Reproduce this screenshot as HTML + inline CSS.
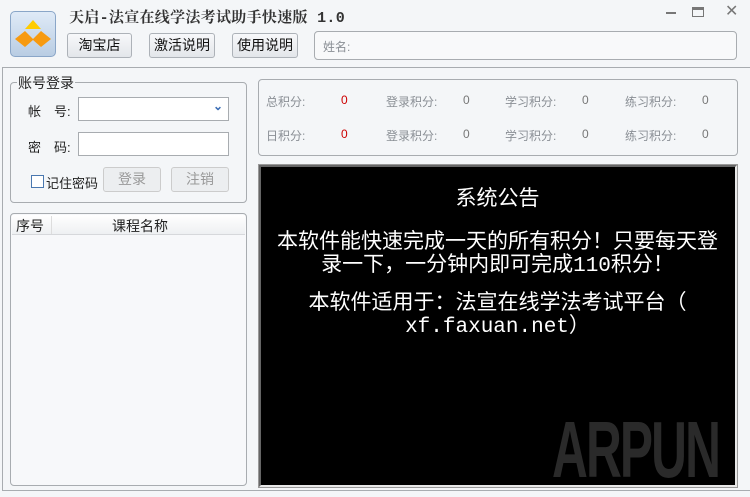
<!DOCTYPE html>
<html><head><meta charset="utf-8"><style>
*{margin:0;padding:0;box-sizing:border-box}
body{width:750px;height:497px;background:#f4f6f8;font-family:"Liberation Sans","Noto Sans CJK SC",sans-serif;font-size:13px;color:#222;position:relative;overflow:hidden}
.a{position:absolute}
.btn{position:absolute;height:25px;border:1px solid #adb2b8;border-radius:3px;background:linear-gradient(#f7f8fa,#e3e6ea);font-size:14px;text-align:center;line-height:23px;color:#111}
.box{position:absolute;border:1px solid #a8acb0;border-radius:4px}
.inp{position:absolute;background:#fff;border:1px solid #a8acb0}
.g{color:#8a8f95;font-size:12px}
.r{color:#c00;font-size:12px}
.n{color:#777;font-size:12px}
.w{color:#fff;font-size:21px;width:477px;text-align:center;left:0;line-height:23px;font-family:"Liberation Mono","Noto Sans CJK SC",monospace;white-space:nowrap}
</style></head><body>
<div class="a" style="left:10px;top:11px;width:46px;height:46px;border-radius:5px;border:1px solid #8aa6c8;background:linear-gradient(#dfeaf7,#b9cde3)">
<svg width="44" height="44" viewBox="0 0 44 44"><polygon points="22,8 30,17 14,17" fill="#ffcc00"/><polygon points="4,27 14,19 22,27 30,19 40,27 30,35 22,28 14,35" fill="#f79a10"/></svg></div>
<div class="a" style="left:69px;top:6px;font-size:15px;font-weight:bold;color:#333;font-family:'Liberation Mono','Noto Serif CJK SC',monospace;letter-spacing:0.3px">天启-法宣在线学法考试助手快速版 1.0</div>
<div class="btn" style="left:67px;top:33px;width:65px">淘宝店</div>
<div class="btn" style="left:149px;top:33px;width:66px">激活说明</div>
<div class="btn" style="left:232px;top:33px;width:66px">使用说明</div>
<div class="box" style="left:314px;top:31px;width:423px;height:29px;background:#f8f9fa"><span class="g" style="position:absolute;left:8px;top:6px">姓名:</span></div>
<div class="a" style="left:666px;top:12px;width:10px;height:2px;background:#777"></div>
<div class="a" style="left:692px;top:7px;width:12px;height:10px;border:1px solid #777;border-top-width:3px"></div>
<div class="a" style="left:725px;top:1px;font-size:16px;color:#777">✕</div>
<div class="a" style="left:2px;top:67px;width:748px;height:424px;border:1px solid #a8acb0;border-right:none"></div>
<div class="box" style="left:10px;top:82px;width:237px;height:121px"></div>
<div class="a" style="left:17px;top:73px;background:#f4f6f8;font-size:14px;padding:0 1px">账号登录</div>
<div class="a" style="left:28px;top:101px;font-size:13px">帐　号:</div>
<div class="inp" style="left:78px;top:97px;width:151px;height:24px"><span style="position:absolute;right:5px;top:1px;color:#3a6db5;font-size:12px;font-weight:bold">⌄</span></div>
<div class="a" style="left:28px;top:137px;font-size:13px">密　码:</div>
<div class="inp" style="left:78px;top:132px;width:151px;height:24px"></div>
<div class="a" style="left:31px;top:175px;width:13px;height:13px;border:1px solid #4a78b0;background:#fff"></div>
<div class="a" style="left:46px;top:173px;font-size:13px">记住密码</div>
<div class="btn" style="left:103px;top:167px;width:58px;color:#999;background:#eceef0;border-color:#ccc">登录</div>
<div class="btn" style="left:171px;top:167px;width:58px;color:#999;background:#eceef0;border-color:#ccc">注销</div>
<div class="box" style="left:10px;top:213px;width:237px;height:273px;background:#f7f8fa"></div>
<div class="a" style="left:12px;top:215px;width:233px;height:20px;background:linear-gradient(#fff,#eef0f2);border-bottom:1px solid #d6d8db"></div>
<div class="a" style="left:51px;top:216px;width:1px;height:18px;background:#ddd"></div>
<div class="a" style="left:16px;top:216px;font-size:14px">序号</div>
<div class="a" style="left:112px;top:216px;font-size:14px">课程名称</div>
<div class="box" style="left:258px;top:79px;width:480px;height:77px"></div>
<div class="a g" style="left:266px;top:93px">总积分:</div><div class="a r" style="left:341px;top:93px">0</div>
<div class="a g" style="left:386px;top:93px">登录积分:</div><div class="a n" style="left:463px;top:93px">0</div>
<div class="a g" style="left:505px;top:93px">学习积分:</div><div class="a n" style="left:582px;top:93px">0</div>
<div class="a g" style="left:625px;top:93px">练习积分:</div><div class="a n" style="left:702px;top:93px">0</div>
<div class="a g" style="left:266px;top:127px">日积分:</div><div class="a r" style="left:341px;top:127px">0</div>
<div class="a g" style="left:386px;top:127px">登录积分:</div><div class="a n" style="left:463px;top:127px">0</div>
<div class="a g" style="left:505px;top:127px">学习积分:</div><div class="a n" style="left:582px;top:127px">0</div>
<div class="a g" style="left:625px;top:127px">练习积分:</div><div class="a n" style="left:702px;top:127px">0</div>
<div class="a" style="left:258px;top:164px;width:480px;height:324px;border:1px solid #999;background:#000;overflow:hidden">
<div class="a" style="left:0;top:0;right:0;bottom:0;border:2px solid #e8e8e8;border-left-color:#666;border-top-color:#666"></div>
<div class="a w" style="top:24px">系统公告</div>
<div class="a w" style="top:67px">本软件能快速完成一天的所有积分！只要每天登<br>录一下，一分钟内即可完成110积分！</div>
<div class="a w" style="top:128px">本软件适用于：法宣在线学法考试平台（<br>xf.faxuan.net）</div>
<div class="a" style="left:293px;top:240px;font-size:80px;font-weight:bold;color:#2a2a2a;font-family:'Liberation Sans',sans-serif;letter-spacing:-3px;transform:scaleX(0.62);transform-origin:left;line-height:90px">ARPUN</div>
</div>
</body></html>
